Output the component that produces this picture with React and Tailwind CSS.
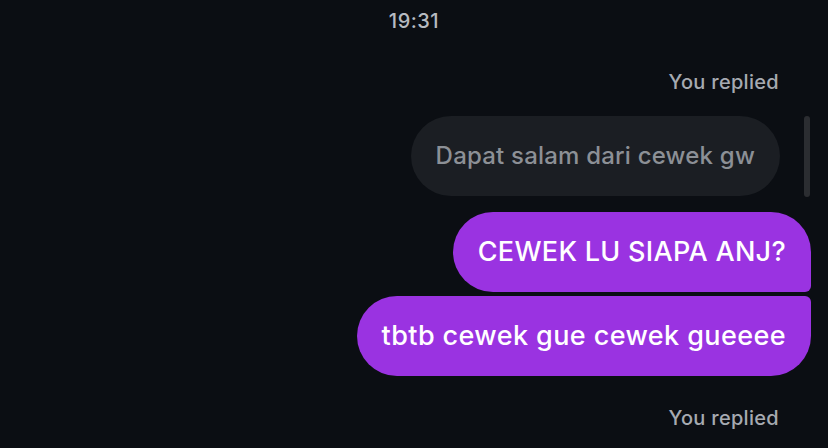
import React from 'react';

const Bubble = ({ text, corner, tracking }) => (
  <div className={`bg-[#9a33e1] text-white text-[27px] font-medium h-[80px] flex items-center px-[25px] ${tracking} ${corner}`}>
    {text}
  </div>
);

export default function App() {
  return (
    <div className="w-[828px] h-[448px] bg-[#0b0e13] overflow-hidden relative" style={{ fontFamily: 'Inter, "Noto Sans", sans-serif' }}>
      <div className="absolute left-[804px] top-[116px] w-[6px] h-[81px] rounded-full bg-[#2b2d31]" />

      <div className="flex flex-col items-end pr-[17px]">
        <div className="w-full text-center text-[20px] tracking-[0.5px] text-[#b6bac0] font-medium pt-[9px] leading-[24px] pl-[17px]">19:31</div>

        <div className="mt-[37px] text-[20px] tracking-[0.3px] font-medium text-[#a6aab1] leading-[24px] pr-[32px]">You replied</div>

        <div className="mt-[22px] mr-[31px] h-[80px] bg-[#1b1e23] rounded-full flex items-center px-[25px] text-[24px] tracking-[0.2px] font-medium text-[#8c9096]">
          Dapat salam dari cewek gw
        </div>

        <div className="mt-[16px] flex flex-col items-end gap-[4px]">
          <Bubble text="CEWEK LU SIAPA ANJ?" tracking="tracking-[0.3px]" corner="rounded-l-[40px] rounded-tr-[40px] rounded-br-[6px]" />
          <Bubble text="tbtb cewek gue cewek gueeee" tracking="tracking-[0.4px]" corner="rounded-l-[40px] rounded-tr-[6px] rounded-br-[40px]" />
        </div>

        <div className="mt-[30px] text-[20px] tracking-[0.3px] font-medium text-[#a6aab1] leading-[24px] pr-[32px]">You replied</div>
      </div>
    </div>
  );
}
